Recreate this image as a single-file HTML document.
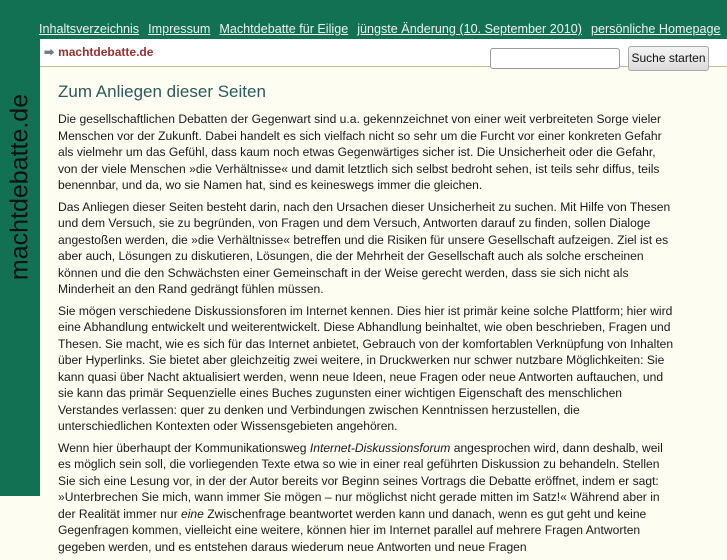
<!DOCTYPE html>
<html><head><meta charset="utf-8"><style>
body{margin:0;width:727px;height:545px;overflow:hidden;background:#fdfdf2;font-family:"Liberation Sans",Arial,sans-serif;position:relative}
#top{position:absolute;left:0;top:0;width:727px;height:39px;background:#127152}
#side{position:absolute;left:0;top:39px;width:40px;height:457px;background:#127152}
#vt{position:absolute;left:20px;top:148px;transform:translate(-50%,-50%) rotate(-90deg);font-size:25px;color:#111;white-space:nowrap}
#nav{position:absolute;left:39px;top:22px;font-size:12.6px;color:#eef4ee;white-space:nowrap}
#nav span{text-decoration:underline;margin-right:9px}
#bar{position:absolute;left:40px;top:39px;width:687px;height:27px;background:#fff;border-bottom:1px solid #c9b98f}
#crumb{position:absolute;left:4px;top:6px;font-size:12px;font-weight:bold;color:#9a2f2f}
#crumb b{color:#777;font-size:12px;margin-right:4px}
#inp{position:absolute;left:450px;top:9px;width:128px;height:19px;border:1px solid #999;border-radius:3px;background:#fff}
#btn{position:absolute;left:588px;top:7px;width:79px;height:23px;border:1px solid #aaa;border-radius:3px;background:linear-gradient(#f4f4f4,#dcdcdc);font-size:12px;color:#111;text-align:center;line-height:23px}
h1{position:absolute;left:58px;top:82px;margin:0;font-size:17px;font-weight:normal;color:#2b5b5b}
#c{position:absolute;left:58px;top:111px;font-size:12.1px;color:#1a1a1a;line-height:16.5px;white-space:nowrap}
#c p{margin:0 0 5px 0}
</style></head><body>
<div id="top"></div><div id="side"><div id="vt">machtdebatte.de</div></div>
<div id="nav"><span>Inhaltsverzeichnis</span><span>Impressum</span><span>Machtdebatte für Eilige</span><span>jüngste Änderung (10. September 2010)</span><span>persönliche Homepage</span></div>
<div id="bar"><div id="crumb"><b>➡</b>machtdebatte.de</div><div id="inp"></div><div id="btn">Suche starten</div></div>
<h1>Zum Anliegen dieser Seiten</h1>
<div id="c">
<p>Die gesellschaftlichen Debatten der Gegenwart sind u.a. gekennzeichnet von einer weit verbreiteten Sorge vieler<br>Menschen vor der Zukunft. Dabei handelt es sich vielfach nicht so sehr um die Furcht vor einer konkreten Gefahr<br>als vielmehr um das Gefühl, dass kaum noch etwas Gegenwärtiges sicher ist. Die Unsicherheit oder die Gefahr,<br>von der viele Menschen »die Verhältnisse« und damit letztlich sich selbst bedroht sehen, ist teils sehr diffus, teils<br>benennbar, und da, wo sie Namen hat, sind es keineswegs immer die gleichen.</p>
<p>Das Anliegen dieser Seiten besteht darin, nach den Ursachen dieser Unsicherheit zu suchen. Mit Hilfe von Thesen<br>und dem Versuch, sie zu begründen, von Fragen und dem Versuch, Antworten darauf zu finden, sollen Dialoge<br>angestoßen werden, die »die Verhältnisse« betreffen und die Risiken für unsere Gesellschaft aufzeigen. Ziel ist es<br>aber auch, Lösungen zu diskutieren, Lösungen, die der Mehrheit der Gesellschaft auch als solche erscheinen<br>können und die den Schwächsten einer Gemeinschaft in der Weise gerecht werden, dass sie sich nicht als<br>Minderheit an den Rand gedrängt fühlen müssen.</p>
<p>Sie mögen verschiedene Diskussionsforen im Internet kennen. Dies hier ist primär keine solche Plattform; hier wird<br>eine Abhandlung entwickelt und weiterentwickelt. Diese Abhandlung beinhaltet, wie oben beschrieben, Fragen und<br>Thesen. Sie macht, wie es sich für das Internet anbietet, Gebrauch von der komfortablen Verknüpfung von Inhalten<br>über Hyperlinks. Sie bietet aber gleichzeitig zwei weitere, in Druckwerken nur schwer nutzbare Möglichkeiten: Sie<br>kann quasi über Nacht aktualisiert werden, wenn neue Ideen, neue Fragen oder neue Antworten auftauchen, und<br>sie kann das primär Sequenzielle eines Buches zugunsten einer wichtigen Eigenschaft des menschlichen<br>Verstandes verlassen: quer zu denken und Verbindungen zwischen Kenntnissen herzustellen, die<br>unterschiedlichen Kontexten oder Wissensgebieten angehören.</p>
<p>Wenn hier überhaupt der Kommunikationsweg <i>Internet-Diskussionsforum</i> angesprochen wird, dann deshalb, weil<br>es möglich sein soll, die vorliegenden Texte etwa so wie in einer real geführten Diskussion zu behandeln. Stellen<br>Sie sich eine Lesung vor, in der der Autor bereits vor Beginn seines Vortrags die Debatte eröffnet, indem er sagt:<br>»Unterbrechen Sie mich, wann immer Sie mögen – nur möglichst nicht gerade mitten im Satz!« Während aber in<br>der Realität immer nur <i>eine</i> Zwischenfrage beantwortet werden kann und danach, wenn es gut geht und keine<br>Gegenfragen kommen, vielleicht eine weitere, können hier im Internet parallel auf mehrere Fragen Antworten<br>gegeben werden, und es entstehen daraus wiederum neue Antworten und neue Fragen</p>
</div>
</body></html>
